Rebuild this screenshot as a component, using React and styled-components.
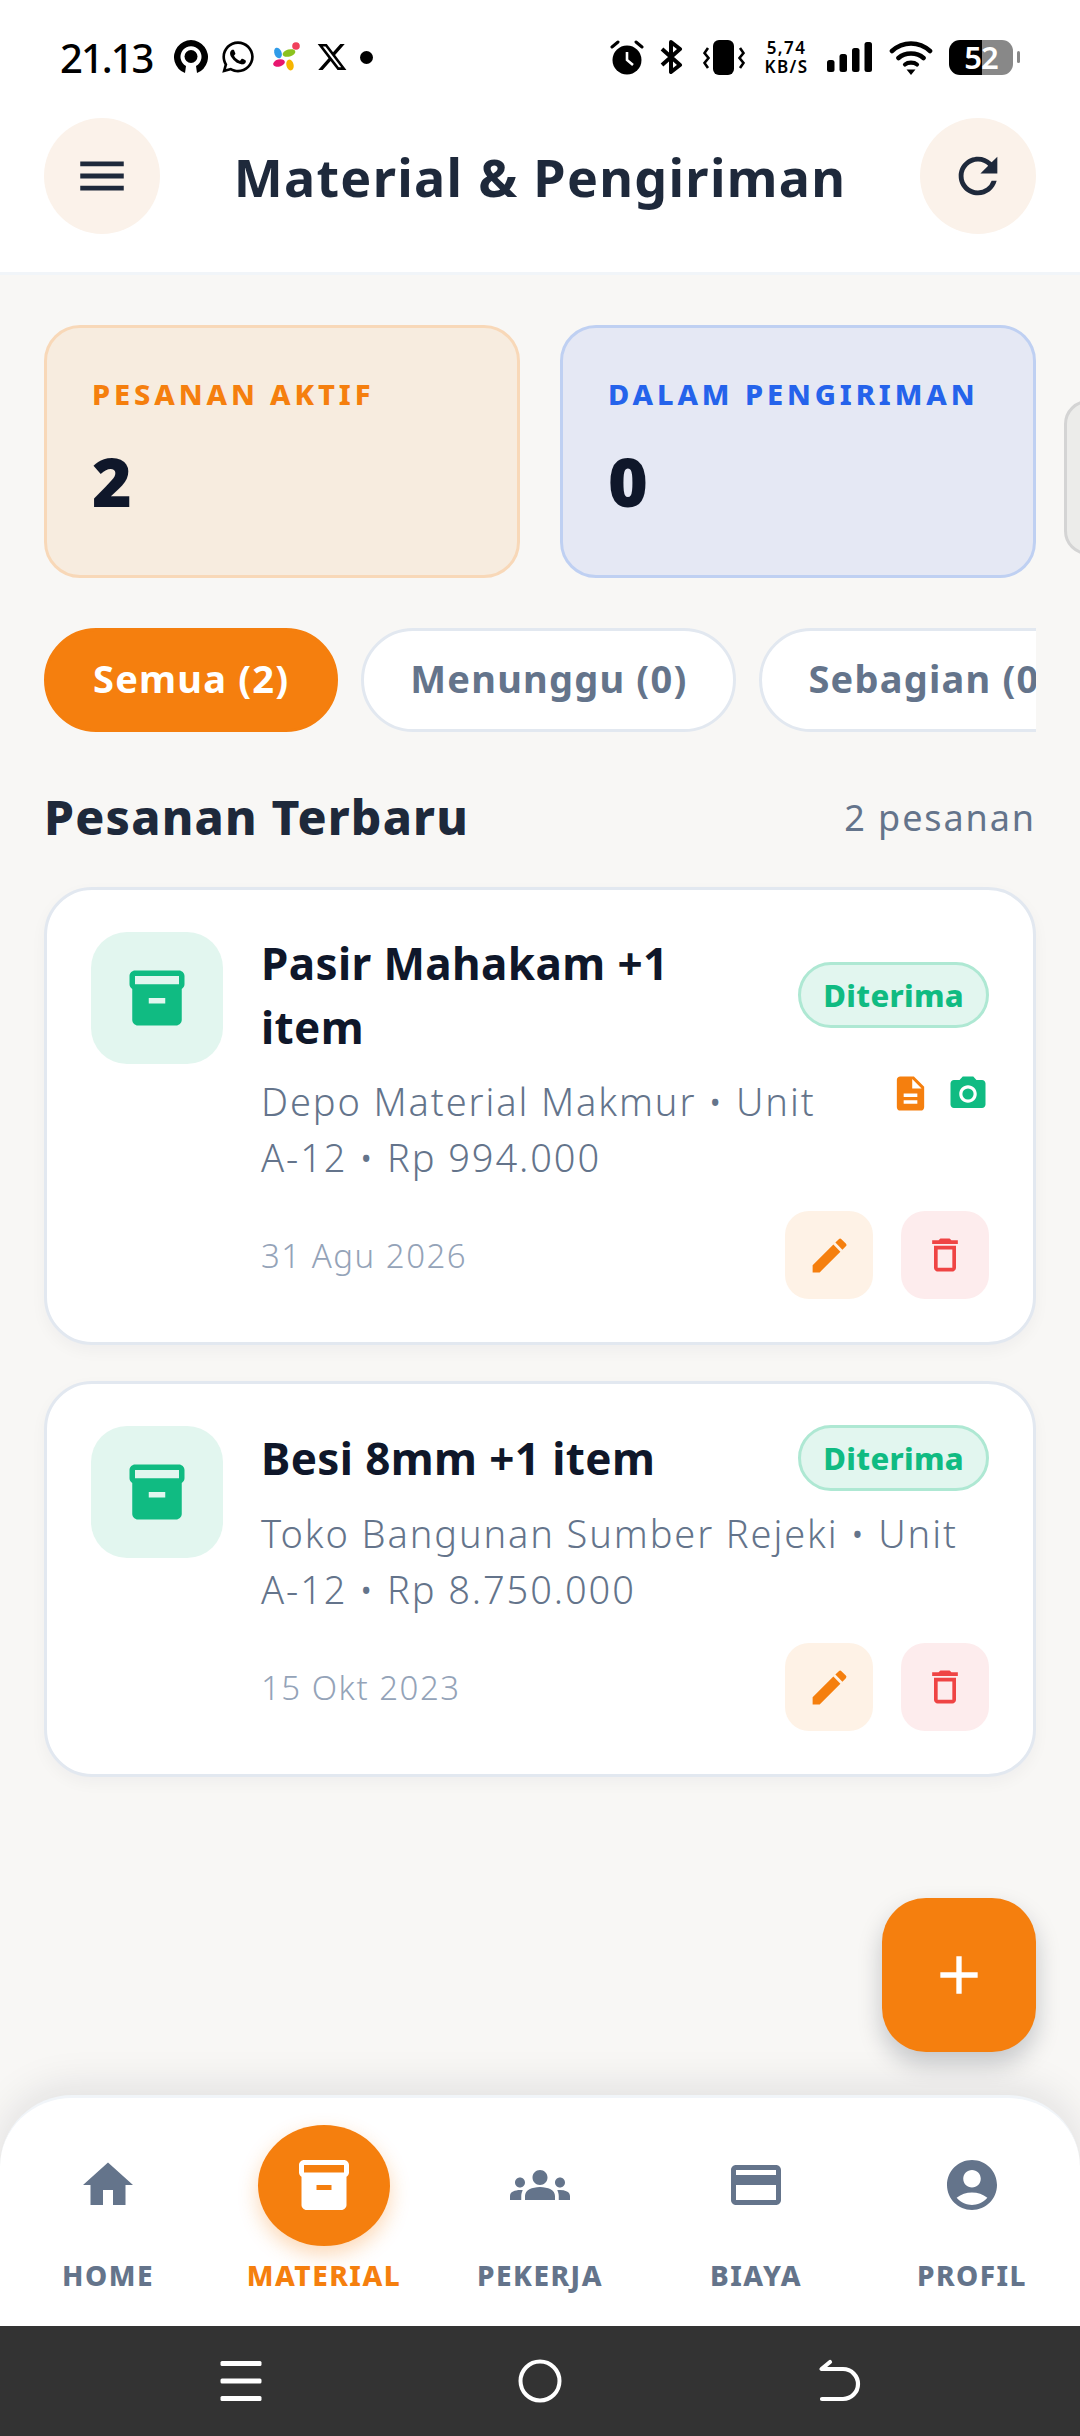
import React from 'react'
import styled, { createGlobalStyle } from 'styled-components'
import {
	MdMenu, MdRefresh, MdInventory2, MdDescription, MdPhotoCamera, MdEdit, MdDeleteOutline,
	MdAdd, MdHome, MdGroups, MdCreditCard, MdAccountCircle,
} from 'react-icons/md'
import { FaWhatsapp } from 'react-icons/fa'
import { FaXTwitter } from 'react-icons/fa6'

const Global = createGlobalStyle`
	html, body { margin: 0; padding: 0; background: #f8f7f5; }
	* { box-sizing: border-box; }
	body { font-family: "Noto Sans", "Open Sans", sans-serif; }
`;

const Screen = styled.div`
	position: relative;
	width: 1080px;
	height: 2436px;
	display: flex;
	flex-direction: column;
	overflow: hidden;
	background: #f8f7f5;
`;

const TopBar = styled.header`
	background: #fff;
	border-bottom: 3px solid #f1f5f9;
	height: 275px;
`;

const StatusBar = styled.div`
	height: 118px;
	padding: 38px 60px 0 60px;
	display: flex;
	align-items: flex-start;
	justify-content: space-between;
	color: #000;
`;

const StatusSide = styled.div`
	display: flex;
	align-items: center;
	height: 38px;
`;

const StatusIcon = styled.span`
	display: flex;
	margin-left: ${p => p.$left || 0}px;
`;

const Clock = styled.span`
	width: 92px;
	font-size: 40px;
	font-weight: 500;
	letter-spacing: -2px;
	white-space: nowrap;
`;

const Speed = styled.div`
	margin-left: 17px;
	width: 49px;
	font-size: 17px;
	font-weight: 600;
	line-height: 19px;
	letter-spacing: 1.4px;
	white-space: nowrap;
	text-align: center;
	color: #000;
`;

const Battery = styled.div`
	margin-left: 16px;
	width: 64px;
	height: 35px;
	border-radius: 11px;
	background: linear-gradient(90deg, #000 51%, #888 51%);
	color: #fff;
	font-size: 31px;
	font-weight: 600;
	line-height: 35px;
	letter-spacing: -1px;
	text-align: center;
`;

const BatteryNub = styled.div`
	margin-left: 4px;
	width: 3px;
	height: 12px;
	border-radius: 2px;
	background: #888;
`;

const HeaderRow = styled.div`
	padding: 0 44px;
	display: flex;
	align-items: center;
	justify-content: space-between;
`;

const RoundButton = styled.div`
	width: 116px;
	height: 116px;
	border-radius: 50%;
	background: #fbf2ea;
	color: #1e293b;
	display: flex;
	align-items: center;
	justify-content: center;
`;

const Title = styled.h1`
	margin: 0;
	font-size: 52px;
	font-weight: 700;
	letter-spacing: 1.3px;
	color: #1e293b;
`;

const Main = styled.main`
	flex: 1;
	padding: 50px 0 0 44px;
	min-height: 0;
`;

const Stats = styled.div`
	display: flex;
	gap: 40px;
	overflow: hidden;
`;

const StatCard = styled.div`
	flex: 0 0 476px;
	height: 253px;
	border-radius: 36px;
	border: 3px solid ${p => p.$border};
	background: ${p => p.$bg};
	padding: 50px 45px;
`;

const StatEdge = styled.div`
	flex: 0 0 40px;
	align-self: flex-end;
	height: 155px;
	margin: 0 0 23px -12px;
	border-radius: 24px 0 0 24px;
	border: 3px solid #d4d4d4;
	background: #ececea;
`;

const StatLabel = styled.div`
	font-size: 29px;
	font-weight: 800;
	letter-spacing: 3.9px;
	line-height: 32px;
	white-space: nowrap;
	color: ${p => p.$color};
`;

const StatValue = styled.div`
	margin-top: 31px;
	font-size: 68px;
	font-weight: 900;
	line-height: 80px;
	color: #0f172a;
`;

const Chips = styled.div`
	margin-top: 50px;
	width: 992px;
	display: flex;
	gap: 23px;
	overflow: hidden;
`;

const Chip = styled.div`
	flex: none;
	height: 104px;
	padding: 0 46px 4px;
	border-radius: 52px;
	display: flex;
	align-items: center;
	font-size: 38px;
	font-weight: 700;
	letter-spacing: 1.2px;
	background: ${p => (p.$active ? '#f57f0e' : '#fff')};
	color: ${p => (p.$active ? '#fff' : '#64748b')};
	border: 3px solid ${p => (p.$active ? '#f57f0e' : '#e2e8f0')};
`;

const SectionRow = styled.div`
	margin-top: 56px;
	width: 992px;
	display: flex;
	align-items: center;
	justify-content: space-between;
`;

const SectionTitle = styled.h2`
	margin: 0;
	font-size: 48px;
	font-weight: 800;
	letter-spacing: 1.2px;
	color: #1e293b;
	line-height: 58px;
`;

const SectionCount = styled.span`
	font-size: 36px;
	color: #64748b;
	letter-spacing: 1.9px;
`;

const OrderList = styled.div`
	width: 992px;
	margin-top: 41px;
	display: flex;
	flex-direction: column;
	gap: 36px;
`;

const OrderCard = styled.article`
	padding: 41px 44px 43px 44px;
	display: flex;
	gap: 38px;
	background: #fff;
	border: 3px solid #e2e8f0;
	border-radius: 48px;
	box-shadow: 0 6px 16px rgba(15, 23, 42, 0.04);
`;

const OrderIcon = styled.div`
	flex: none;
	width: 132px;
	height: 132px;
	margin-top: 1px;
	border-radius: 36px;
	background: #e2f6ef;
	color: #10bb82;
	display: flex;
	align-items: center;
	justify-content: center;
`;

const OrderBody = styled.div`
	flex: 1;
	min-width: 0;
`;

const OrderTop = styled.div`
	display: flex;
	justify-content: space-between;
	align-items: center;
`;

const OrderName = styled.div`
	width: 470px;
	font-size: 44px;
	font-weight: 700;
	line-height: 64px;
	letter-spacing: 0.4px;
	color: #0f172a;
`;

const Badge = styled.div`
	flex: none;
	height: 66px;
	padding: 0 22px;
	border-radius: 33px;
	background: #e2f6ef;
	border: 3px solid #aee8d3;
	color: #10bb82;
	font-size: 31px;
	font-weight: 800;
	letter-spacing: 0.3px;
	display: flex;
	align-items: center;
`;

const DetailRow = styled.div`
	margin-top: 14px;
	display: flex;
	gap: 30px;
	justify-content: space-between;
	align-items: flex-start;
`;

const Detail = styled.div`
	flex: 1;
	font-size: 38px;
	line-height: 56px;
	color: #64748b;
	font-weight: 350;
	letter-spacing: 1.9px;
`;

const UnitCode = styled.span`
	white-space: nowrap;
`;

const Attachments = styled.div`
	flex: none;
	display: flex;
	gap: 16px;
`;

const OrderBottom = styled.div`
	margin-top: 26px;
	display: flex;
	justify-content: space-between;
	align-items: center;
`;

const OrderDate = styled.span`
	font-size: 33px;
	font-weight: 350;
	letter-spacing: 1.5px;
	color: #94a3b8;
`;

const Actions = styled.div`
	display: flex;
	gap: 28px;
`;

const ActionButton = styled.div`
	width: 88px;
	height: 88px;
	border-radius: 24px;
	background: ${p => p.$bg};
	color: ${p => p.$color};
	display: flex;
	align-items: center;
	justify-content: center;
`;

const Fab = styled.div`
	position: absolute;
	right: 44px;
	top: 1898px;
	width: 154px;
	height: 154px;
	border-radius: 44px;
	background: #f57f0e;
	color: #fff;
	display: flex;
	align-items: center;
	justify-content: center;
	box-shadow: 0 12px 24px rgba(15, 23, 42, 0.22);
`;

const BottomNav = styled.nav`
	height: 231px;
	background: #fff;
	border-top: 3px solid #f1f5f9;
	border-radius: 72px 72px 0 0;
	box-shadow: 0 -8px 40px rgba(15, 23, 42, 0.1);
	display: grid;
	grid-template-columns: repeat(5, 1fr);
	z-index: 1;
`;

const NavItem = styled.div`
	display: flex;
	flex-direction: column;
	align-items: center;
	color: ${p => (p.$active ? '#f57f0e' : '#64748b')};
`;

const NavIconSlot = styled.div`
	height: 162px;
	padding-top: 12px;
	display: flex;
	align-items: center;
	justify-content: center;
`;

const NavBubble = styled.div`
	width: 132px;
	height: 121px;
	border-radius: 50%;
	background: #f57f0e;
	color: #fff;
	display: flex;
	align-items: center;
	justify-content: center;
	box-shadow: 0 8px 20px rgba(245, 127, 14, 0.3);
`;

const NavLabel = styled.span`
	font-size: 28px;
	font-weight: 800;
	letter-spacing: 1.5px;
	line-height: 30px;
`;

const SystemBar = styled.div`
	height: 110px;
	background: #333;
	display: flex;
	align-items: center;
	justify-content: center;
	gap: 255px;
	color: #fff;
	z-index: 1;
`;

const orders = [
	{
		name: 'Pasir Mahakam +1 item',
		supplier: 'Depo Material Makmur',
		unit: 'A-12',
		price: 'Rp 994.000',
		date: '31 Agu 2026',
		files: true,
	},
	{
		name: 'Besi 8mm +1 item',
		supplier: 'Toko Bangunan Sumber Rejeki',
		unit: 'A-12',
		price: 'Rp 8.750.000',
		date: '15 Okt 2023',
		files: false,
	},
]

const navItems = [
	{ label: 'HOME', Icon: MdHome },
	{ label: 'MATERIAL', Icon: MdInventory2, active: true },
	{ label: 'PEKERJA', Icon: MdGroups },
	{ label: 'BIAYA', Icon: MdCreditCard },
	{ label: 'PROFIL', Icon: MdAccountCircle },
]

const RideIcon = () => (
	<svg width="36" height="34" viewBox="0 0 36 34">
		<path d="M12 33 A17 17 0 1 1 24 33 L23 26 A10.5 10.5 0 1 0 13 26 Z" />
		<circle cx="18" cy="16.5" r="6.5" />
	</svg>
)

const ColorIcon = () => (
	<svg width="30" height="30" viewBox="0 0 30 30">
		<ellipse cx="6" cy="11" rx="3.6" ry="5.5" fill="#2f9be8" transform="rotate(-20 6 11)" />
		<ellipse cx="17" cy="11" rx="6.5" ry="3.6" fill="#8cc21f" transform="rotate(-15 17 11)" />
		<ellipse cx="7" cy="21" rx="6" ry="3.6" fill="#e8166f" transform="rotate(-15 7 21)" />
		<ellipse cx="18" cy="23" rx="3.6" ry="5.5" fill="#f7b500" transform="rotate(-15 18 23)" />
		<circle cx="24" cy="4" r="3.8" fill="#f0405a" />
	</svg>
)

const AlarmIcon = () => (
	<svg width="34" height="35" viewBox="0 0 34 35">
		<circle cx="17" cy="20" r="14.5" />
		<path d="M17 12 V20 L23 25" fill="none" stroke="#fff" strokeWidth="2.6" />
		<path d="M2 7 L8 2 M32 7 L26 2" fill="none" stroke="#000" strokeWidth="3" strokeLinecap="round" />
	</svg>
)

const BluetoothIcon = () => (
	<svg width="26" height="34" viewBox="0 0 26 34">
		<path d="M3 9 L21 25 L12 32 V2 L21 9 L3 25" fill="none" stroke="#000" strokeWidth="4" strokeLinejoin="round" />
	</svg>
)

const VibrateIcon = () => (
	<svg width="42" height="35" viewBox="0 0 42 35">
		<rect x="10" y="0" width="21" height="35" rx="6" />
		<path d="M5 8 L1.5 13 L5.5 18 L1.5 23 L5 28 M37 8 L40.5 13 L36.5 18 L40.5 23 L37 28" fill="none" stroke="#000" strokeWidth="2.6" />
	</svg>
)

const SignalIcon = () => (
	<svg width="45" height="30" viewBox="0 0 45 30">
		<rect x="0" y="18" width="7.5" height="12" rx="2.5" />
		<rect x="12.5" y="12" width="7.5" height="18" rx="2.5" />
		<rect x="25" y="6" width="7.5" height="24" rx="2.5" />
		<rect x="37.5" y="0" width="7.5" height="30" rx="2.5" />
	</svg>
)

const WifiIcon = () => (
	<svg width="44" height="35" viewBox="0 0 44 35">
		<path d="M3 11 C14 1 30 1 41 11 M9.5 18 C16 12 28 12 34.5 18" fill="none" stroke="#000" strokeWidth="4.6" strokeLinecap="round" />
		<path d="M16 24.5 C19 22 25 22 28 24.5" fill="none" stroke="#000" strokeWidth="4.2" strokeLinecap="round" />
		<path d="M17.5 29.5 H26.5 L22 35 Z" />
	</svg>
)

const NavLinesIcon = () => (
	<svg width="44" height="44" viewBox="0 0 44 44">
		<rect x="1.5" y="2" width="41" height="5" rx="1.5" fill="#fff" />
		<rect x="1.5" y="19.5" width="41" height="5" rx="1.5" fill="#fff" />
		<rect x="1.5" y="37" width="41" height="5" rx="1.5" fill="#fff" />
	</svg>
)

const NavCircleIcon = () => (
	<svg width="44" height="44" viewBox="0 0 44 44">
		<circle cx="22" cy="22" r="19.5" fill="none" stroke="#fff" strokeWidth="4" />
	</svg>
)

const NavBackIcon = () => (
	<svg width="44" height="44" viewBox="0 0 44 44" fill="none" stroke="#fff" strokeWidth="4.2" strokeLinecap="round" strokeLinejoin="round">
		<path d="M13 3 L4.5 10 H26 A15 15 0 0 1 26 40 H5" />
	</svg>
)

const App = () => {
	return (
		<>
			<Global />
			<Screen>
				<TopBar>
					<StatusBar>
						<StatusSide>
							<Clock>21.13</Clock>
							<StatusIcon $left={21}><RideIcon /></StatusIcon>
							<StatusIcon $left={11}><FaWhatsapp size={36} /></StatusIcon>
							<StatusIcon $left={16}><ColorIcon /></StatusIcon>
							<StatusIcon $left={14}><FaXTwitter size={32} /></StatusIcon>
							<StatusIcon $left={12}>
								<svg width="13" height="13" viewBox="0 0 12 12"><circle cx="6" cy="6" r="6" /></svg>
							</StatusIcon>
						</StatusSide>
						<StatusSide>
							<AlarmIcon />
							<StatusIcon $left={15}><BluetoothIcon /></StatusIcon>
							<StatusIcon $left={18}><VibrateIcon /></StatusIcon>
							<Speed>5,74<br />KB/S</Speed>
							<StatusIcon $left={16}><SignalIcon /></StatusIcon>
							<StatusIcon $left={17}><WifiIcon /></StatusIcon>
							<Battery>52</Battery>
							<BatteryNub />
						</StatusSide>
					</StatusBar>
					<HeaderRow>
						<RoundButton><MdMenu size={58} /></RoundButton>
						<Title>Material &amp; Pengiriman</Title>
						<RoundButton><MdRefresh size={58} /></RoundButton>
					</HeaderRow>
				</TopBar>

				<Main>
					<Stats>
						<StatCard $bg="#f7ecdf" $border="#f8d8b8">
							<StatLabel $color="#f57f0e">PESANAN AKTIF</StatLabel>
							<StatValue>2</StatValue>
						</StatCard>
						<StatCard $bg="#e5e8f4" $border="#bfd0f2">
							<StatLabel $color="#2563eb">DALAM PENGIRIMAN</StatLabel>
							<StatValue>0</StatValue>
						</StatCard>
						<StatEdge />
					</Stats>

					<Chips>
						<Chip $active>Semua (2)</Chip>
						<Chip>Menunggu (0)</Chip>
						<Chip>Sebagian (0)</Chip>
					</Chips>

					<SectionRow>
						<SectionTitle>Pesanan Terbaru</SectionTitle>
						<SectionCount>2 pesanan</SectionCount>
					</SectionRow>

					<OrderList>
						{orders.map(order => (
							<OrderCard key={order.name}>
								<OrderIcon><MdInventory2 size={66} /></OrderIcon>
								<OrderBody>
									<OrderTop>
										<OrderName>{order.name}</OrderName>
										<Badge>Diterima</Badge>
									</OrderTop>
									<DetailRow>
										<Detail>
											{order.supplier} • Unit <UnitCode>{order.unit}</UnitCode> • {order.price}
										</Detail>
										{order.files && (
											<Attachments>
												<MdDescription size={41} color="#f57f0e" />
												<MdPhotoCamera size={42} color="#10bb82" />
											</Attachments>
										)}
									</DetailRow>
									<OrderBottom>
										<OrderDate>{order.date}</OrderDate>
										<Actions>
											<ActionButton $bg="#fef2e6" $color="#f57f0e"><MdEdit size={45} /></ActionButton>
											<ActionButton $bg="#fdeced" $color="#ef4444"><MdDeleteOutline size={44} /></ActionButton>
										</Actions>
									</OrderBottom>
								</OrderBody>
							</OrderCard>
						))}
					</OrderList>
				</Main>

				<Fab><MdAdd size={64} /></Fab>

				<BottomNav>
					{navItems.map(({ label, Icon, active }) => (
						<NavItem key={label} $active={active}>
							<NavIconSlot>
								{active
									? <NavBubble><Icon size={60} /></NavBubble>
									: <Icon size={60} />}
							</NavIconSlot>
							<NavLabel>{label}</NavLabel>
						</NavItem>
					))}
				</BottomNav>

				<SystemBar>
					<NavLinesIcon />
					<NavCircleIcon />
					<NavBackIcon />
				</SystemBar>
			</Screen>
		</>
	)
}

export default App
